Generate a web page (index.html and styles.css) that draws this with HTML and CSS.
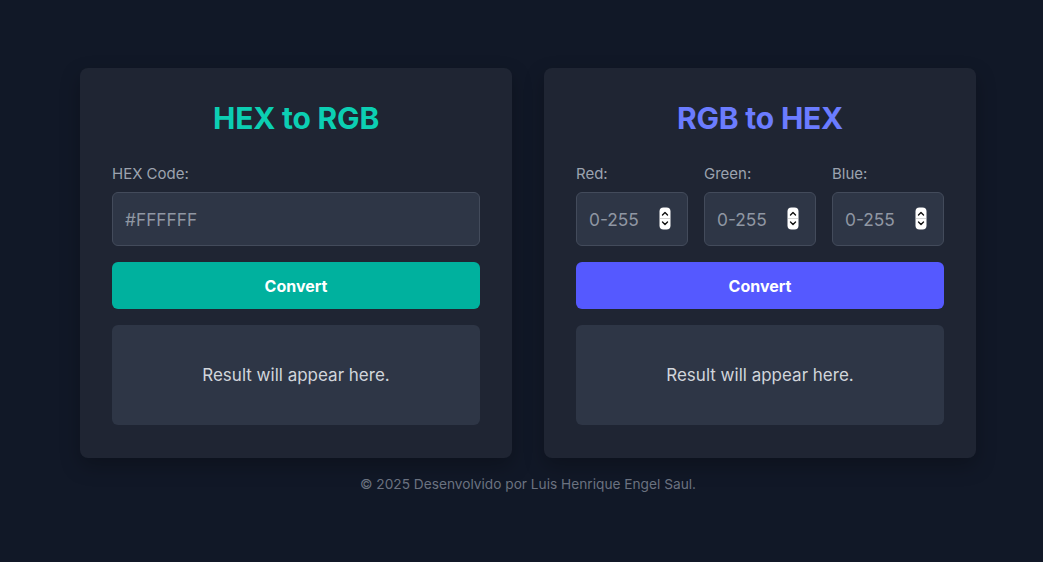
FILE: index.html
```html
<!DOCTYPE html>
<html lang="pt-BR">
<head>
<meta charset="utf-8">
<title>Color Converter</title>
<link rel="stylesheet" href="styles.css">
</head>
<body>
<main class="page">
  <div class="cards">
    <section class="card">
      <h1 class="title title-teal">HEX to RGB</h1>
      <label class="label" for="hex">HEX Code:</label>
      <input id="hex" class="field" type="text" placeholder="#FFFFFF">
      <button class="btn btn-teal">Convert</button>
      <div class="result">Result will appear here.</div>
    </section>
    <section class="card">
      <h1 class="title title-indigo">RGB to HEX</h1>
      <div class="rgb-row">
        <div class="rgb-col">
          <label class="label">Red:</label>
          <div class="num">
            <input class="field num-field" type="text" placeholder="0-255">
            <span class="spin"><svg width="12" height="23" viewBox="0 0 12 23"><rect x="0.5" y="0.5" width="11" height="22" rx="4" fill="#fff"/><line x1="1" y1="11.5" x2="11" y2="11.5" stroke="#d6d6d6" stroke-width="1"/><path d="M3.5 8 L6 5.5 L8.5 8" fill="none" stroke="#111" stroke-width="1.4" stroke-linecap="round" stroke-linejoin="round"/><path d="M3.5 15 L6 17.5 L8.5 15" fill="none" stroke="#111" stroke-width="1.4" stroke-linecap="round" stroke-linejoin="round"/></svg></span>
          </div>
        </div>
        <div class="rgb-col">
          <label class="label">Green:</label>
          <div class="num">
            <input class="field num-field" type="text" placeholder="0-255">
            <span class="spin"><svg width="12" height="23" viewBox="0 0 12 23"><rect x="0.5" y="0.5" width="11" height="22" rx="4" fill="#fff"/><line x1="1" y1="11.5" x2="11" y2="11.5" stroke="#d6d6d6" stroke-width="1"/><path d="M3.5 8 L6 5.5 L8.5 8" fill="none" stroke="#111" stroke-width="1.4" stroke-linecap="round" stroke-linejoin="round"/><path d="M3.5 15 L6 17.5 L8.5 15" fill="none" stroke="#111" stroke-width="1.4" stroke-linecap="round" stroke-linejoin="round"/></svg></span>
          </div>
        </div>
        <div class="rgb-col">
          <label class="label">Blue:</label>
          <div class="num">
            <input class="field num-field" type="text" placeholder="0-255">
            <span class="spin"><svg width="12" height="23" viewBox="0 0 12 23"><rect x="0.5" y="0.5" width="11" height="22" rx="4" fill="#fff"/><line x1="1" y1="11.5" x2="11" y2="11.5" stroke="#d6d6d6" stroke-width="1"/><path d="M3.5 8 L6 5.5 L8.5 8" fill="none" stroke="#111" stroke-width="1.4" stroke-linecap="round" stroke-linejoin="round"/><path d="M3.5 15 L6 17.5 L8.5 15" fill="none" stroke="#111" stroke-width="1.4" stroke-linecap="round" stroke-linejoin="round"/></svg></span>
          </div>
        </div>
      </div>
      <button class="btn btn-indigo">Convert</button>
      <div class="result">Result will appear here.</div>
    </section>
  </div>
  <footer class="footer">© 2025 Desenvolvido por Luis Henrique Engel Saul.</footer>
</main>
</body>
</html>
```
FILE: styles.css
```css
* { box-sizing: border-box; }
html, body { margin: 0; padding: 0; }
body {
  background: #111827;
  font-family: Inter, "Noto Sans", "Liberation Sans", sans-serif;
  color: #e5e7eb;
  min-height: 562px;
}
.page {
  width: 896px;
  margin-left: 80px;
  padding-top: 68px;
}
.cards {
  display: grid;
  grid-template-columns: 1fr 1fr;
  gap: 32px;
}
.card {
  background: #1f2533;
  border-radius: 8px;
  padding: 32px;
  height: 390px;
  box-shadow: 0 8px 20px rgba(0,0,0,0.25);
  display: flex;
  flex-direction: column;
}
.title {
  margin: 0 0 28px;
  text-align: center;
  font-size: 30px;
  line-height: 36px;
  font-weight: 700;
  letter-spacing: -0.2px;
}
.title-teal { color: #0ccfb3; }
.title-indigo { color: #6b7cff; }
.label {
  display: block;
  font-size: 15px;
  line-height: 20px;
  color: #9ca3af;
  margin-bottom: 8px;
}
.field {
  display: block;
  width: 100%;
  height: 54px;
  background: #2e3646;
  border: 1px solid #434b5b;
  border-radius: 6px;
  padding: 0 12px;
  font-family: inherit;
  font-size: 17.3px;
  color: #e5e7eb;
  outline: none;
}
.field::placeholder { color: #9097a3; }
.rgb-row {
  display: grid;
  grid-template-columns: 1fr 1fr 1fr;
  gap: 16px;
}
.num { position: relative; }
.num-field { padding-right: 34px; }
.spin {
  position: absolute;
  right: 17px;
  top: 15px;
  width: 12px;
  height: 23px;
  display: block;
}
.spin svg { display: block; }
.btn {
  margin-top: 16px;
  height: 47px;
  width: 100%;
  border: none;
  border-radius: 6px;
  color: #fff;
  font-family: inherit;
  font-size: 16px;
  font-weight: 700;
}
.btn-teal { background: #00b19e; }
.btn-indigo { background: #5559ff; }
.result {
  margin-top: 16px;
  height: 100px;
  background: #2e3646;
  border-radius: 6px;
  display: flex;
  align-items: center;
  justify-content: center;
  font-size: 17px;
  color: #d1d5db;
}
.footer {
  margin-top: 16px;
  text-align: center;
  font-size: 13.7px;
  line-height: 20px;
  color: #6b7280;
}
```
